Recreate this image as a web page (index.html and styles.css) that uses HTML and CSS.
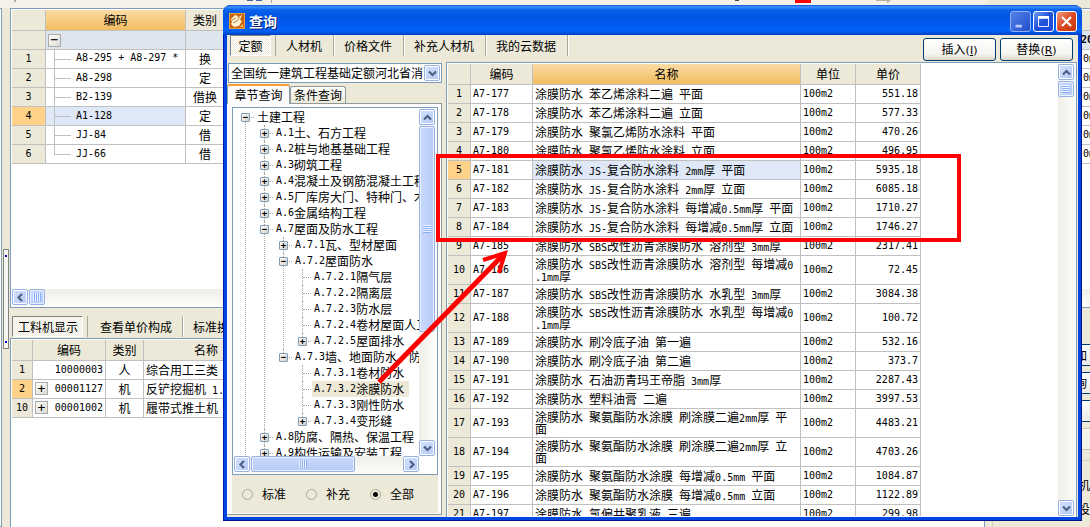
FILE: index.html
```html
<!DOCTYPE html>
<html lang="zh-CN">
<head>
<meta charset="utf-8">
<title>查询</title>
<link rel="stylesheet" href="styles.css">
</head>
<body>
<svg class="defs" aria-hidden="true">
  <symbol id="left" viewBox="0 0 9 9"><path d="M6 1L2.5 4.500L6 8" fill="none" stroke="#4d6185" stroke-width="2.200"/></symbol>
  <symbol id="right" viewBox="0 0 9 9"><path d="M3 1L6.500 4.500L3 8" fill="none" stroke="#4d6185" stroke-width="2.200"/></symbol>
  <symbol id="up" viewBox="0 0 9 9"><path d="M1 6.500L4.500 3L8 6.500" fill="none" stroke="#4d6185" stroke-width="2.200"/></symbol>
  <symbol id="down" viewBox="0 0 9 9"><path d="M1 2.500L4.500 6L8 2.500" fill="none" stroke="#4d6185" stroke-width="2.200"/></symbol>
</svg>

<div class="app">
  <div class="app-strip">
    <svg width="1090" height="8" viewBox="0 0 1090 8" aria-hidden="true">
      <path d="M14 0h2v2h-2zM271 0h1v3h-1z" fill="#aca899"/>
      <path d="M247 0h6v1h-6zM256 0h6v1h-6z" fill="#4a5f9e"/>
      <path d="M795 0h16v3h-16z" fill="#f00"/>
      <path d="M735 0h4v1h-4z" fill="#445"/>
      <path d="M876 0h11v-1l4 2l-4 2v-2h-11z" fill="#b5b2a6"/>
    </svg>
  </div>
  <div class="edge"></div>
  <div class="splitter"><div class="grip"></div></div>
  <div class="main">
    <section class="upper">
      <div class="upper-body">
        <table class="grid list">
          <thead><tr><th class="c33"></th><th class="c140 hot">编码</th><th class="c60 start">类别</th></tr></thead>
          <tbody>
            <tr class="group"><th></th><td><button class="box" aria-label="折叠">−</button></td><td></td></tr>
            <tr><th>1</th><td><div class="branch first">A8-295 + A8-297 *</div></td><td class="kind">换</td></tr>
            <tr><th>2</th><td><div class="branch">A8-298</div></td><td class="kind">定</td></tr>
            <tr><th>3</th><td><div class="branch">B2-139</div></td><td class="kind">借换</td></tr>
            <tr class="current"><th>4</th><td><div class="branch">A1-128</div></td><td class="kind">定</td></tr>
            <tr><th>5</th><td><div class="branch">JJ-84</div></td><td class="kind">借</td></tr>
            <tr><th>6</th><td><div class="branch last">JJ-66</div></td><td class="kind">借</td></tr>
          </tbody>
        </table>
        <div class="sliver">
          <div class="s-head"></div><div class="s-row s-bold">20</div>
          <div class="s-row">0m</div><div class="s-row">0m</div><div class="s-row">0m</div><div class="s-row">0m</div><div class="s-row">0m</div><div class="s-row">0m</div>
        </div>
      </div>
      <div class="hbar">
        <button class="sb" aria-label="向左"><svg><use href="#left"/></svg></button>
        <div class="thumb hthumb small"></div>
      </div>
    </section>
    <section class="lower">
      <div class="detail">
        <div class="tools detail-tools">
          <button class="tool pressed">工料机显示</button><button class="tool">查看单价构成</button><button class="tool">标准换算</button>
        </div>
        <div class="detail-body">
          <table class="grid">
            <thead><tr><th class="c20"></th><th class="c73">编码</th><th class="c38">类别</th><th class="c125">名称</th></tr></thead>
            <tbody>
              <tr><th>1</th><td class="num">10000003</td><td class="kind">人</td><td class="cjk">综合用工三类</td></tr>
              <tr class="marked"><th>2</th><td class="num"><button class="box">+</button>00001127</td><td class="kind">机</td><td class="cjk">反铲挖掘机<span class="m"> 1.</span></td></tr>
              <tr><th>10</th><td class="num"><button class="box">+</button>00001002</td><td class="kind">机</td><td class="cjk">履带式推土机</td></tr>
            </tbody>
          </table>
        </div>
      </div>
      <aside class="side">
        <button class="side-btn">加</button><button class="side-btn">询</button><button class="side-btn" aria-label="删除"></button>
        <div class="side-field"></div>
        <div class="side-group"><span>机</span><span>投</span></div>
      </aside>
    </section>
  </div>
</div>

<div class="window" role="dialog" aria-labelledby="wtitle">
  <header class="titlebar">
    <svg class="logo" viewBox="0 0 16 16" aria-hidden="true">
      <rect width="16" height="16" fill="#e9a33a"/><rect x="1" y="1" width="14" height="14" fill="#c8640c"/>
      <path d="M2 6L6 2l3 1-1 2 5-3-2 5 2 1-3 5-5 1-3-3 1-2z" fill="#fff3d2"/>
      <path d="M3 7l4-2M4 10l4-2M11 4l-3 4" stroke="#a75a12" stroke-width="0.700" fill="none"/>
      <path d="M11 14l3-3v3z" fill="#ffd25a"/>
    </svg>
    <h1 id="wtitle">查询</h1>
    <div class="wbtns">
      <button class="wb dim" aria-label="最小化"><svg viewBox="0 0 21 21"><path d="M5 14h7v3H5z" fill="#b9cdf8"/></svg></button>
      <button class="wb" aria-label="最大化"><svg viewBox="0 0 21 21"><path d="M5 5h11v11H5z" fill="none" stroke="#fff"/><path d="M4.500 4.500h12v3h-12z" fill="#fff"/></svg></button>
      <button class="wb close" aria-label="关闭"><svg viewBox="0 0 21 21"><path d="M5.500 5.500l10 10M15.500 5.500l-10 10" stroke="#fff" stroke-width="2.400"/></svg></button>
    </div>
  </header>
  <div class="client">
    <div class="bar">
      <nav class="tools">
        <button class="tool pressed">定额</button><button class="tool">人材机</button><button class="tool">价格文件</button><button class="tool">补充人材机</button><button class="tool">我的云数据</button>
      </nav>
      <div class="actions">
        <button class="push">插入<span class="key">(<u>I</u>)</span></button>
        <button class="push">替换<span class="key">(<u>R</u>)</span></button>
      </div>
    </div>
    <div class="panes">
      <div class="nav">
        <div class="combo">
          <select aria-label="定额库"><option>全国统一建筑工程基础定额河北省消</option></select>
          <span class="sb drop"><svg><use href="#down"/></svg></span>
        </div>
        <div class="tabs" role="tablist">
          <button class="tab active" role="tab" aria-selected="true">章节查询</button><button class="tab" role="tab">条件查询</button>
        </div>
        <div class="page">
          <div class="treebox">
            <div class="tree">
              <ul class="root">
                <li><div class="node"><button class="exp">−</button>土建工程</div>
                  <ul>
                    <li><div class="node"><button class="exp">+</button><span class="m">A.1</span>土、石方工程</div></li>
                    <li><div class="node"><button class="exp">+</button><span class="m">A.2</span>桩与地基基础工程</div></li>
                    <li><div class="node"><button class="exp">+</button><span class="m">A.3</span>砌筑工程</div></li>
                    <li><div class="node"><button class="exp">+</button><span class="m">A.4</span>混凝土及钢筋混凝土工程</div></li>
                    <li><div class="node"><button class="exp">+</button><span class="m">A.5</span>厂库房大门、特种门、木</div></li>
                    <li><div class="node"><button class="exp">+</button><span class="m">A.6</span>金属结构工程</div></li>
                    <li><div class="node"><button class="exp">−</button><span class="m">A.7</span>屋面及防水工程</div>
                      <ul>
                        <li><div class="node"><button class="exp">+</button><span class="m">A.7.1</span>瓦、型材屋面</div></li>
                        <li><div class="node"><button class="exp">−</button><span class="m">A.7.2</span>屋面防水</div>
                          <ul>
                            <li><div class="node leaf"><span class="m">A.7.2.1</span>隔气层</div></li>
                            <li><div class="node leaf"><span class="m">A.7.2.2</span>隔离层</div></li>
                            <li><div class="node leaf"><span class="m">A.7.2.3</span>防水层</div></li>
                            <li><div class="node leaf"><span class="m">A.7.2.4</span>卷材屋面人工</div></li>
                            <li><div class="node"><button class="exp">+</button><span class="m">A.7.2.5</span>屋面排水</div></li>
                          </ul></li>
                        <li><div class="node"><button class="exp">−</button><span class="m">A.7.3</span>墙、地面防水、防</div>
                          <ul>
                            <li><div class="node leaf"><span class="m">A.7.3.1</span>卷材防水</div></li>
                            <li><div class="node leaf"><span class="picked"><span class="m">A.7.3.2</span>涂膜防水</span></div></li>
                            <li><div class="node leaf"><span class="m">A.7.3.3</span>刚性防水</div></li>
                            <li><div class="node"><button class="exp">+</button><span class="m">A.7.3.4</span>变形缝</div></li>
                          </ul></li>
                      </ul></li>
                    <li><div class="node"><button class="exp">+</button><span class="m">A.8</span>防腐、隔热、保温工程</div></li>
                    <li><div class="node"><button class="exp">+</button><span class="m">A.9</span>构件运输及安装工程</div></li>
                    <li></li>
                  </ul></li>
                <li></li>
              </ul>
            </div>
            <div class="vbar">
              <button class="sb" aria-label="向上"><svg><use href="#up"/></svg></button>
              <div class="thumb vthumb long"></div>
              <button class="sb end" aria-label="向下"><svg><use href="#down"/></svg></button>
            </div>
            <div class="hbar tree-h">
              <button class="sb" aria-label="向左"><svg><use href="#left"/></svg></button>
              <div class="thumb hthumb wide"></div>
              <button class="sb end" aria-label="向右"><svg><use href="#right"/></svg></button>
            </div>
          </div>
          <div class="radios">
            <label><input type="radio" name="scope">标准</label>
            <label><input type="radio" name="scope">补充</label>
            <label><input type="radio" name="scope" checked>全部</label>
          </div>
        </div>
      </div>
      <div class="result">
        <div class="result-view">
          <table class="grid">
            <thead><tr><th class="c22"></th><th class="c62">编码</th><th class="c268 hot">名称</th><th class="c55">单位</th><th class="c65">单价</th></tr></thead>
            <tbody>
              <tr><th>1</th><td>A7-177</td><td class="cjk">涂膜防水<span class="m"> </span>苯乙烯涂料二遍<span class="m"> </span>平面</td><td>100m2</td><td class="num">551.18</td></tr>
              <tr><th>2</th><td>A7-178</td><td class="cjk">涂膜防水<span class="m"> </span>苯乙烯涂料二遍<span class="m"> </span>立面</td><td>100m2</td><td class="num">577.33</td></tr>
              <tr><th>3</th><td>A7-179</td><td class="cjk">涂膜防水<span class="m"> </span>聚氯乙烯防水涂料<span class="m"> </span>平面</td><td>100m2</td><td class="num">470.26</td></tr>
              <tr><th>4</th><td>A7-180</td><td class="cjk">涂膜防水<span class="m"> </span>聚氯乙烯防水涂料<span class="m"> </span>立面</td><td>100m2</td><td class="num">496.95</td></tr>
              <tr class="selected"><th>5</th><td>A7-181</td><td class="cjk">涂膜防水<span class="m"> JS-</span>复合防水涂料<span class="m"> 2mm</span>厚<span class="m"> </span>平面</td><td>100m2</td><td class="num">5935.18</td></tr>
              <tr><th>6</th><td>A7-182</td><td class="cjk">涂膜防水<span class="m"> JS-</span>复合防水涂料<span class="m"> 2mm</span>厚<span class="m"> </span>立面</td><td>100m2</td><td class="num">6085.18</td></tr>
              <tr><th>7</th><td>A7-183</td><td class="cjk">涂膜防水<span class="m"> JS-</span>复合防水涂料<span class="m"> </span>每增减<span class="m">0.5mm</span>厚<span class="m"> </span>平面</td><td>100m2</td><td class="num">1710.27</td></tr>
              <tr><th>8</th><td>A7-184</td><td class="cjk">涂膜防水<span class="m"> JS-</span>复合防水涂料<span class="m"> </span>每增减<span class="m">0.5mm</span>厚<span class="m"> </span>立面</td><td>100m2</td><td class="num">1746.27</td></tr>
              <tr><th>9</th><td>A7-185</td><td class="cjk">涂膜防水<span class="m"> SBS</span>改性沥青涂膜防水<span class="m"> </span>溶剂型<span class="m"> 3mm</span>厚</td><td>100m2</td><td class="num">2317.41</td></tr>
              <tr class="tall"><th>10</th><td>A7-186</td><td class="cjk">涂膜防水<span class="m"> SBS</span>改性沥青涂膜防水<span class="m"> </span>溶剂型<span class="m"> </span>每增减<span class="m">0</span><br><span class="m">.1mm</span>厚</td><td>100m2</td><td class="num">72.45</td></tr>
              <tr><th>11</th><td>A7-187</td><td class="cjk">涂膜防水<span class="m"> SBS</span>改性沥青涂膜防水<span class="m"> </span>水乳型<span class="m"> 3mm</span>厚</td><td>100m2</td><td class="num">3084.38</td></tr>
              <tr class="tall"><th>12</th><td>A7-188</td><td class="cjk">涂膜防水<span class="m"> SBS</span>改性沥青涂膜防水<span class="m"> </span>水乳型<span class="m"> </span>每增减<span class="m">0</span><br><span class="m">.1mm</span>厚</td><td>100m2</td><td class="num">100.72</td></tr>
              <tr><th>13</th><td>A7-189</td><td class="cjk">涂膜防水<span class="m"> </span>刷冷底子油<span class="m"> </span>第一遍</td><td>100m2</td><td class="num">532.16</td></tr>
              <tr><th>14</th><td>A7-190</td><td class="cjk">涂膜防水<span class="m"> </span>刷冷底子油<span class="m"> </span>第二遍</td><td>100m2</td><td class="num">373.7</td></tr>
              <tr><th>15</th><td>A7-191</td><td class="cjk">涂膜防水<span class="m"> </span>石油沥青玛王帝脂<span class="m"> 3mm</span>厚</td><td>100m2</td><td class="num">2287.43</td></tr>
              <tr><th>16</th><td>A7-192</td><td class="cjk">涂膜防水<span class="m"> </span>塑料油膏<span class="m"> </span>二遍</td><td>100m2</td><td class="num">3997.53</td></tr>
              <tr class="tall"><th>17</th><td>A7-193</td><td class="cjk">涂膜防水<span class="m"> </span>聚氨酯防水涂膜<span class="m"> </span>刷涂膜二遍<span class="m">2mm</span>厚<span class="m"> </span>平<br>面</td><td>100m2</td><td class="num">4483.21</td></tr>
              <tr class="tall"><th>18</th><td>A7-194</td><td class="cjk">涂膜防水<span class="m"> </span>聚氨酯防水涂膜<span class="m"> </span>刷涂膜二遍<span class="m">2mm</span>厚<span class="m"> </span>立<br>面</td><td>100m2</td><td class="num">4703.26</td></tr>
              <tr><th>19</th><td>A7-195</td><td class="cjk">涂膜防水<span class="m"> </span>聚氨酯防水涂膜<span class="m"> </span>每增减<span class="m">0.5mm </span>平面</td><td>100m2</td><td class="num">1084.87</td></tr>
              <tr><th>20</th><td>A7-196</td><td class="cjk">涂膜防水<span class="m"> </span>聚氨酯防水涂膜<span class="m"> </span>每增减<span class="m">0.5mm </span>立面</td><td>100m2</td><td class="num">1122.89</td></tr>
              <tr><th>21</th><td>A7-197</td><td class="cjk">涂膜防水<span class="m"> </span>氯偏共聚乳液<span class="m"> </span>三遍</td><td>100m2</td><td class="num">299.98</td></tr>
            </tbody>
          </table>
        </div>
        <div class="vbar">
          <button class="sb" aria-label="向上"><svg><use href="#up"/></svg></button>
          <div class="thumb vthumb"></div>
          <button class="sb end" aria-label="向下"><svg><use href="#down"/></svg></button>
        </div>
      </div>
    </div>
  </div>
</div>

<svg class="marks" width="1090" height="527" viewBox="0 0 1090 527" aria-hidden="true">
  <g fill="none" stroke="#f00" stroke-width="4">
    <rect x="438" y="156" width="521" height="84"/>
    <path d="M379 382L504 254" stroke-width="5"/>
    <path d="M483 260L505 253L499 273" stroke-width="4"/>
  </g>
</svg>
</body>
</html>
```

FILE: styles.css
```css
* { box-sizing: border-box; }
html, body { height: 100%; }
body {
  margin: 0;
  position: relative;
  overflow: hidden;
  background: #ece9d8;
  color: #000;
  font: 12px/16px "Noto Sans CJK SC", sans-serif;
}
button, select, input { font: inherit; color: inherit; margin: 0; padding: 0; }
button { border: 0; background: none; white-space: nowrap; }
.defs { position: absolute; width: 0; height: 0; }
.m { font: 10px/12px "DejaVu Sans Mono", monospace; white-space: pre; }

/* main application behind the dialog */
.app {
  display: grid;
  grid-template: 8px 1fr / 2px 8px 1fr;
  height: 100%;
}
.app-strip {
  grid-column: 1 / -1;
  overflow: hidden;
  background: linear-gradient(90deg, #f4f2e8 0, #f4f2e8 90%, #ece9d8 91%);
}
.app-strip svg { display: block; }
.edge { background: #fff; border: 1px solid #7f9db9; border-left: 0; }
.splitter { display: flex; justify-content: flex-end; padding: 241px 1px 0 0; }
.grip {
  width: 6px;
  height: 100px;
  border: 1px solid #808080;
  background: radial-gradient(circle at 2px 6px, #00c 1px, transparent 1px), radial-gradient(circle at 2px 92px, #00c 1px, #f7f6f0 1px);
}
.main { display: grid; grid-template-rows: 300px 1fr; min-width: 0; }
.upper {
  display: flex;
  flex-direction: column;
  background: #fff;
  border: 1px solid #7f9db9;
  border-right: 0;
  padding: 1px 0 1px 1px;
}
.upper-body { display: flex; justify-content: space-between; flex: 1; }

/* grids */
.grid {
  table-layout: fixed;
  width: 0;
  border-collapse: separate;
  border-spacing: 0;
  align-self: flex-start;
}
.grid th, .grid td {
  height: 19px;
  padding: 0 2px;
  border: solid #c0c0c0;
  border-width: 0 1px 1px 0;
  font: 10px/16px "DejaVu Sans Mono", monospace;
  white-space: nowrap;
  overflow: hidden;
  text-align: left;
}
.grid th { background: #ece9d8; text-align: center; }
.grid thead th { height: 21px; font: 12px/16px "Noto Sans CJK SC", sans-serif; }
.grid thead th.hot { background: linear-gradient(#fbdba5, #f1bd60); }
.grid thead th.start { text-align: left; padding-left: 7px; }
.grid .cjk, .grid .kind { font: 12px/12px "Noto Sans CJK SC", sans-serif; }
.grid .cjk .m { line-height: 0; }
.grid .kind { text-align: center; }
.grid .num { text-align: right; }
.grid .tall td, .grid .tall th { height: 29px; }
.c20 { width: 21px; } .c22 { width: 23px; } .c33 { width: 34px; }
.c38 { width: 38px; } .c55 { width: 55px; } .c60 { width: 39px; }
.c62 { width: 62px; } .c65 { width: 65px; } .c73 { width: 73px; }
.c125 { width: 125px; } .c140 { width: 140px; } .c268 { width: 268px; }
.grid .group td { background: #dde5ef; }
.grid .current td:nth-child(2), .grid .selected td:nth-child(3) { background: #dfe8f6; }
.grid .current th, .grid .marked th, .grid .selected th { background: #ffd28a; }
.box {
  display: inline-block;
  width: 13px;
  height: 13px;
  border: 1px solid #aaa;
  background: linear-gradient(135deg, #fff, #dcdad0);
  font: 13px/10px "DejaVu Sans Mono", monospace;
  vertical-align: middle;
}
.num .box { float: left; margin-top: 1px; }
.num { padding-right: 4px; }
.branch { position: relative; padding-left: 28px; height: 18px; line-height: 18px; }
.branch.first { line-height: 16px; }
.branch::before {
  content: "";
  position: absolute;
  left: 6px;
  top: 0;
  width: 1px;
  height: 19px;
  background: #c0c0c0;
}
.branch.last::before { height: 9px; }
.branch::after {
  content: "";
  position: absolute;
  left: 6px;
  top: 9px;
  width: 17px;
  height: 1px;
  background: #c0c0c0;
}
.sliver { width: 12px; font: 10px/18px "DejaVu Sans Mono", monospace; overflow: hidden; }
.s-head { height: 21px; background: #ece9d8; border-bottom: 1px solid #c0c0c0; }
.s-row { height: 19px; padding-left: 5px; border-bottom: 1px solid #c0c0c0; }
.s-bold { font-weight: bold; padding-left: 3px; background: #dde5ef; }

/* scroll bars */
.hbar, .vbar { display: flex; gap: 1px; }
.hbar { height: 17px; background: linear-gradient(#efeee8, #fdfdfa); }
.vbar { flex-direction: column; width: 17px; background: linear-gradient(90deg, #efeee8, #fdfdfa); }
.sb {
  display: flex;
  flex: none;
  align-items: center;
  justify-content: center;
  width: 16px;
  height: 16px;
  border: 1px solid #98b1e4;
  border-radius: 2px;
  box-shadow: inset 0 0 0 1px #fff;
  background: linear-gradient(135deg, #d5e1fd, #b4c9f8);
}
.sb svg { width: 9px; height: 9px; }
.sb.end { margin-top: auto; }
.hbar .sb.end { margin: 0 0 0 auto; }
.thumb {
  display: flex;
  align-items: center;
  justify-content: center;
  width: 16px;
  height: 16px;
  border: 1px solid #98b1e4;
  border-radius: 2px;
  box-shadow: inset 0 0 0 1px #e8effe;
  background: linear-gradient(90deg, #c9d8fc, #b8cbf8);
}
.hthumb { background: linear-gradient(#c9d8fc, #b8cbf8); }
.thumb::before { content: ""; width: 8px; height: 8px; background: repeating-linear-gradient(#eef4fe 0 1px, #8cb0f8 1px 2px); }
.hthumb::before { background: repeating-linear-gradient(90deg, #eef4fe 0 1px, #8cb0f8 1px 2px); }
.thumb.wide { width: 104px; }
.thumb.long { height: 206px; }

/* toolbars */
.tools { display: flex; align-items: center; height: 21px; }
.tool { height: 21px; padding: 0 10px; border-right: 1px solid #aca899; box-shadow: 1px 0 #fff; line-height: 18px; }
.tool.pressed {
  margin-right: 5px;
  padding: 0 5px;
  border: 1px solid #808080;
  border-right-color: #fff;
  border-bottom-color: #fff;
  background: repeating-conic-gradient(#ece9d8 0 25%, #fff 0 50%) 0 0 / 2px 2px;
  box-shadow: 4px 0 #ece9d8, 5px 0 #aca899;
}

/* lower application area */
.lower { display: grid; grid-template-columns: 1fr 105px; min-height: 0; }
.detail { display: flex; flex-direction: column; min-width: 0; padding-top: 8px; }
.detail-tools { padding-left: 2px; }
.detail-tools .tool.pressed { width: 71px; margin-right: 7px; }
.detail-body { flex: 1; margin-top: 1px; padding: 1px; border: 1px solid #7f9db9; border-bottom: 0; background: #fff; }
.side { display: flex; flex-direction: column; gap: 6px; padding: 36px 0 0 7px; }
.side-btn {
  height: 22px;
  padding-right: 3px;
  border: 1px solid #003c74;
  border-right: 0;
  background: linear-gradient(#fff, #ecebe6);
  text-align: right;
}
.side-field { height: 22px; border: solid #c8c5b6; border-width: 1px 0; background: #f5f4ea; }
.side-group { display: flex; flex: 1; flex-direction: column; gap: 8px; align-items: flex-end; margin-top: 4px; padding-top: 16px; border: solid #d0d0bf; border-width: 1px 0 0 1px; }

/* dialog */
.window {
  position: absolute;
  inset: 5px 8px 6px 223px;
  display: flex;
  flex-direction: column;
  padding: 0 4px 4px;
  border-radius: 8px 8px 0 0;
  background: #0046e0;
  box-shadow: inset 1px 0 #0019b0, inset -1px -1px #00138c;
  overflow: hidden;
}
.titlebar {
  display: flex;
  flex: none;
  align-items: center;
  height: 30px;
  margin: 0 -4px;
  padding: 2px 5px 0 6px;
  background: linear-gradient(#0a4fd0 0, #3f90ff 6%, #0a62ec 16%, #0054e3 40%, #005cf5 70%, #0062fa 86%, #0040c0 100%);
}
.logo { width: 16px; height: 16px; }
.titlebar h1 { flex: 1; margin: 0 0 0 4px; color: #fff; font-size: 14px; line-height: 20px; text-shadow: 1px 1px #0a1f70; }
.wbtns { display: flex; gap: 2px; }
.wb { width: 21px; height: 21px; border: 1px solid #fff; border-radius: 3px; background: linear-gradient(135deg, #6f9bf5, #1f50d8 50%, #1a4be0); }
.wb svg { display: block; width: 19px; height: 19px; }
.wb.dim { border-color: #8fb0f5; background: linear-gradient(135deg, #5580e8, #2250cc); }
.wb.close { background: linear-gradient(135deg, #f09a80, #dc4a22 50%, #c8350e); }
.client { display: flex; flex: 1; flex-direction: column; min-height: 0; background: #ece9d8; }
.bar { display: flex; justify-content: space-between; align-items: flex-start; height: 27px; padding: 0 5px 0 3px; }
.bar .tool { padding: 0 11px 0 10px; }
.bar .tool.pressed { width: 41px; padding: 0 5px; }
.actions { display: flex; gap: 4px; padding-top: 3px; }
.push {
  width: 73px;
  height: 23px;
  border: 1px solid #003c74;
  border-radius: 3px;
  background: linear-gradient(#fff, #f5f4ef 70%, #dcd8cb);
  line-height: 18px;
}
.key { font: 11px/16px "DejaVu Sans", sans-serif; }
.panes { display: grid; grid-template-columns: 215px 1fr; gap: 4px; flex: 1; min-height: 0; }
.nav { display: flex; flex-direction: column; min-height: 0; padding: 1px 0 2px; }
.combo { position: relative; height: 20px; margin-left: 1px; border: 1px solid #7f9db9; background: #fff; }
.combo select { display: block; width: 100%; height: 17px; padding-left: 2px; border: 0; background: none; appearance: none; line-height: 16px; }
.drop { position: absolute; right: 1px; top: 1px; pointer-events: none; }
.tabs { display: flex; align-items: flex-end; height: 20px; }
.tab { height: 17px; width: 56px; padding: 0 3px; border: 1px solid #919b9c; border-bottom: 0; border-radius: 3px 3px 0 0; background: linear-gradient(#fff, #ece9d8); line-height: 16px; }
.tab.active { z-index: 1; width: 63px; height: 20px; margin-bottom: -1px; border-top: 2px solid #f3a23a; background: #fcfcfe; }
.page { display: flex; flex: 1; flex-direction: column; min-height: 0; padding: 3px 3px 1px 4px; border: 1px solid #919b9c; border-left-color: #fff; background: #fcfcfe; }
.treebox {
  display: grid;
  grid-template: 1fr 17px / 1fr 17px;
  flex: 1;
  min-height: 0;
  padding: 1px;
  border: 1px solid #7f9db9;
  background: #fff;
}
.tree-h { grid-column: 1; }
.tree { overflow: hidden; padding-left: 7px; }
.tree ul { margin: 0; padding: 0 0 0 19px; list-style: none; }
.tree .root { padding: 0; }
.tree li { position: relative; }
.tree li::before {
  content: "";
  position: absolute;
  left: 4px;
  top: 0;
  height: 100%;
  border-left: 1px dotted #aca899;
}
.tree li:last-child::before { height: 8px; }
.tree .root > li:first-child::before { top: 8px; }
.node { position: relative; display: flex; align-items: center; height: 16px; padding-left: 16px; line-height: 16px; white-space: nowrap; }
.node::before { content: ""; position: absolute; left: 5px; top: 8px; width: 8px; border-top: 1px dotted #aca899; }
.exp {
  position: absolute;
  left: 0;
  top: 4px;
  width: 9px;
  height: 9px;
  border: 1px solid #7f9db9;
  border-radius: 1px;
  background: linear-gradient(135deg, #fff, #d6d0c2);
  font: bold 9px/7px "DejaVu Sans Mono", monospace;
}
.picked { display: flex; align-items: center; height: 16px; margin-left: -2px; padding: 0 5px 0 2px; background: #ece9d8; }
.radios { display: flex; gap: 17px; flex: none; align-items: center; height: 38px; padding-left: 10px; background: #ece9d8; }
.radios label { display: flex; align-items: center; gap: 9px; width: 47px; }
.radios input { appearance: none; flex: none; width: 11px; height: 11px; border: 1px solid #aca899; border-radius: 50%; background: #ece9d8; }
.radios input:checked { background: radial-gradient(circle, #000 2px, #ece9d8 3px); }
.result { display: flex; min-width: 0; min-height: 0; margin-right: 1px; padding: 1px; border: 1px solid #7f9db9; border-bottom: 0; background: #fff; }
.result-view { flex: 1; overflow: hidden; }

/* red annotation over everything */
.marks { position: absolute; left: 0; top: 0; pointer-events: none; }
```
